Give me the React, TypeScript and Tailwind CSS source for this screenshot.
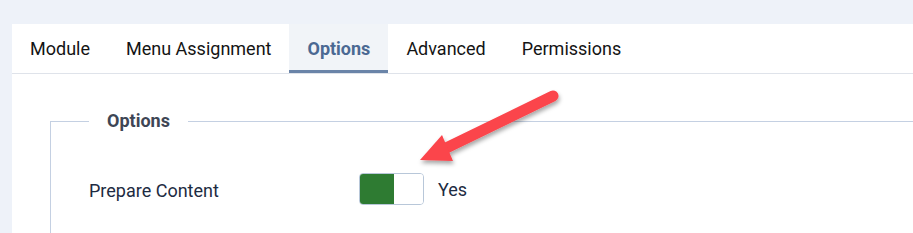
import React from "react";

export default function App() {
  const tabs = ["Module", "Menu Assignment", "Options", "Advanced", "Permissions"];
  return (
    <div className="w-[913px] h-[233px] overflow-hidden bg-[#eef2f9] pt-[24px] pl-[12px] relative" style={{ fontFamily: "Roboto, 'Noto Sans', sans-serif" }}>
      <div className="bg-white w-[940px] h-[260px]">
        <div className="flex border-b border-[#dfe3ea] h-[50px]">
          {tabs.map((t) => {
            const active = t === "Options";
            return (
              <div
                key={t}
                className={
                  active
                    ? "px-[18px] flex items-center text-[18px] font-bold text-[#4b6993] bg-[#f1f4f8] border-b-[3px] border-[#6a84a8] pt-[2px]"
                    : "px-[18px] flex items-center text-[18px] text-[#141414] pb-[1px]"
                }
              >
                {t}
              </div>
            );
          })}
        </div>
        <div className="pt-[35px] pl-[38px]">
          <fieldset className="border border-[#c4d0e2] pl-[38px] pb-[40px] w-[900px]">
            <legend className="px-[18px] text-[18px] font-bold text-[#3e4655] leading-[24px]">Options</legend>
            <div className="flex items-center mt-[40px]">
              <div className="w-[270px] text-[18px] text-[#1d2b42] pt-[2px]">Prepare Content</div>
              <div className="flex w-[65px] h-[32px] rounded-[4px] border border-[#b8c7d9] overflow-hidden">
                <div className="w-[34px] bg-[#2e7b32]" />
                <div className="flex-1 bg-white" />
              </div>
              <div className="ml-[14px] text-[18px] text-[#1d2b42]">Yes</div>
            </div>
          </fieldset>
        </div>
      </div>
      <svg className="absolute left-0 top-0 pointer-events-none" width="913" height="233" viewBox="0 0 913 233">
        <defs>
          <filter id="sh" x="-20%" y="-20%" width="140%" height="140%">
            <feDropShadow dx="1" dy="3" stdDeviation="2" floodColor="#000" floodOpacity="0.35" />
          </filter>
        </defs>
        <g filter="url(#sh)">
          <line x1="553" y1="96" x2="440" y2="151" stroke="#fb444b" strokeWidth="11" strokeLinecap="round" />
          <polygon points="420,160 442,135 453,161" fill="#fb444b" />
        </g>
      </svg>
    </div>
  );
}
